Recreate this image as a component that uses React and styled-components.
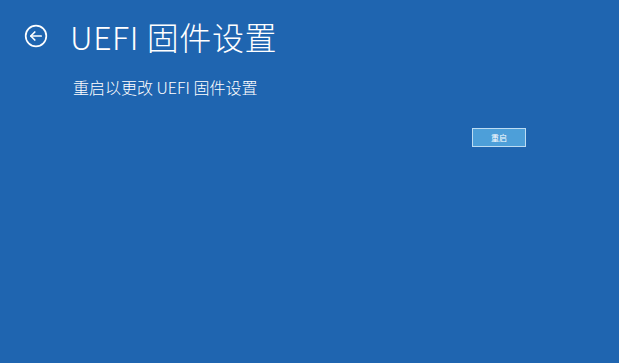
import styled, { createGlobalStyle } from 'styled-components';

const GlobalStyle = createGlobalStyle`
    html, body {
        margin: 0;
        padding: 0;
        background: #1f65b0;
    }
    body {
        font-family: "Noto Sans CJK SC", "Noto Sans", sans-serif;
        color: #fff;
    }
`;

const Page = styled.div`
    width: 619px;
    height: 363px;
    background: #1f65b0;
    overflow: hidden;
    display: flex;
    flex-direction: column;
`;

const Header = styled.div`
    display: flex;
    align-items: center;
    gap: 22px;
    padding: 14px 0 0 24px;
    height: 44px;
`;

const BackButton = styled.button`
    width: 24px;
    height: 24px;
    padding: 0;
    border: none;
    background: none;
    display: flex;
    align-items: center;
    justify-content: center;
    cursor: pointer;
`;

const Title = styled.h1`
    margin: 0;
    font-size: 32px;
    font-weight: 300;
    line-height: 44px;
    letter-spacing: 0.6px;
`;

const Body = styled.div`
    padding: 18px 0 0 73px;
    display: flex;
    flex-direction: column;
`;

const Description = styled.p`
    margin: 0;
    font-size: 16px;
    font-weight: 300;
    line-height: 22px;
`;

const Actions = styled.div`
    display: flex;
    justify-content: flex-end;
    width: 453px;
    padding-top: 30px;
`;

const RestartButton = styled.button`
    width: 54px;
    height: 19px;
    padding: 0;
    border: 1px solid #bcdcf3;
    background: #4d9fd9;
    color: #fff;
    font-family: "Noto Sans CJK SC", sans-serif;
    font-size: 8px;
    line-height: 17px;
    cursor: pointer;
`;

function BackIcon() {
    return (
        <svg width="24" height="24" viewBox="0 0 24 24" fill="none" stroke="#fff" strokeWidth="1.7" strokeLinecap="round" strokeLinejoin="round">
            <circle cx="12" cy="12" r="10.3" />
            <path d="M17.2 12H7" />
            <path d="M10.8 8L6.8 12L10.8 16" />
        </svg>
    );
}

function App() {
    return (
        <Page>
            <GlobalStyle />
            <Header>
                <BackButton aria-label="返回">
                    <BackIcon />
                </BackButton>
                <Title>UEFI 固件设置</Title>
            </Header>
            <Body>
                <Description>重启以更改 UEFI 固件设置</Description>
                <Actions>
                    <RestartButton>重启</RestartButton>
                </Actions>
            </Body>
        </Page>
    );
}

export default App;
